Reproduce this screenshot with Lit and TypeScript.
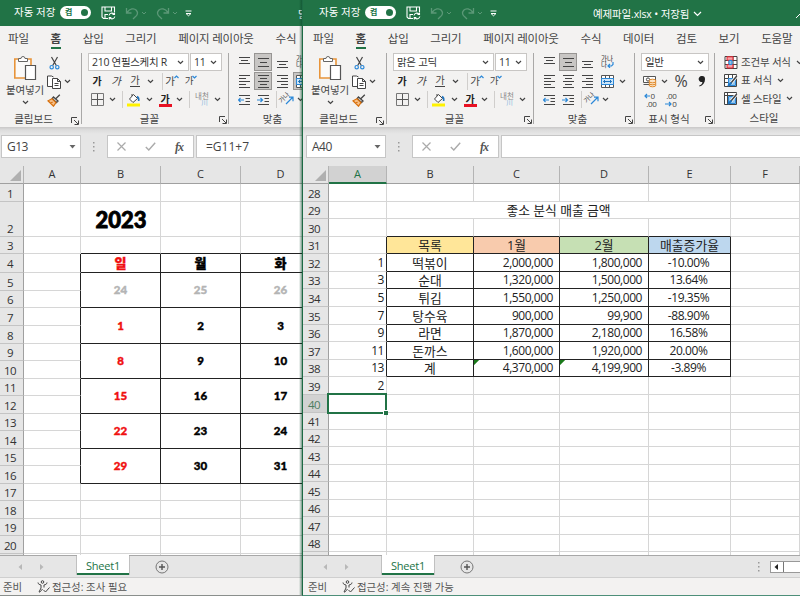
import { LitElement, html, svg, css, nothing } from "lit";
import { customElement, property } from "lit/decorators.js";
import { classMap } from "lit/directives/class-map.js";
import { styleMap } from "lit/directives/style-map.js";

const icon = (w: number, h: number, body: unknown) =>
  html`<svg width=${w} height=${h} viewBox="0 0 ${w} ${h}" fill="none" stroke="#444" stroke-width="1">${body}</svg>`;

const chev = () => icon(7, 5, svg`<path d="M1 1l2.500 2.500L6 1" stroke-width="1.2"/>`);
const launcher = () =>
  icon(8, 8, svg`<path d="M.5 6V.5H6M3 3l4 4M7.500 3.500v4h-4" />`);

const save = () =>
  icon(15, 14, svg`<g stroke="#fff" stroke-width="1.1"><path d="M7 12.500H2.500L1 11V1h12.500v5"/><path d="M4 1v4h6.500V1M4 12V8.500h3"/><path d="M8 9.500a2.800 2.800 0 0 1 5-1.200M13.500 6.500v2h-2M13.800 10.500a2.800 2.800 0 0 1-5 1.200M8.300 13.500v-2h2"/></g>`);
const undo = () =>
  icon(14, 13, svg`<path stroke="#5b9877" stroke-width="1.300" d="M1.500 1v5h5M2 5.500C5 1.500 9 .8 11.300 3.200c2.200 2.400 1 5-1 6.600L8 12"/>`);
const redo = () =>
  icon(14, 13, svg`<path stroke="#5b9877" stroke-width="1.300" d="M12.500 1v5h-5M12 5.500C9 1.500 5 .8 2.700 3.200c-2.200 2.400-1 5 1 6.600L6 12"/>`);
const dimChev = () => icon(6, 5, svg`<path stroke="#5b9877" d="M1 1l2 2 2-2"/>`);
const customize = () => icon(7, 7, svg`<path stroke="#fff" d="M.5 1h6M1 3.500l2.500 2.300L6 3.500z"/>`);

const paste = () =>
  icon(24, 27, svg`<path stroke="#e8943a" stroke-width="1.600" fill="#fbfaf9" d="M12 23H1.800V4H18v6"/><path fill="#fff" stroke="#666" d="M5.500 6.500v-3H8a2 2 0 0 1 4 0h2.500v3z"/><path fill="#fff" stroke="#555" stroke-width="1.200" d="M12.500 10.500h10v14h-10z"/>`);
const cut = () =>
  icon(11, 14, svg`<path stroke-width="1.200" d="M2.500 1l4.800 8.500M8.500 1L3.700 9.500"/><circle cx="2.700" cy="11.200" r="1.700" stroke="#2b88d8" stroke-width="1.200"/><circle cx="8.300" cy="11.200" r="1.700" stroke="#2b88d8" stroke-width="1.200"/>`);
const copy = () =>
  icon(14, 14, svg`<path fill="#fff" d="M5 11.500H.5V1h4l2 1"/><path fill="#fff" d="M5.500 3.500h5l3 3v7h-8zM10.500 3.500v3h3M7.500 8.500h4M7.500 10.500h4"/>`);
const brush = () =>
  icon(14, 13, svg`<path stroke-width="1.300" d="M12.800.8L9 4.500M6.500 3l4.500 4-1.500 1.500-4.300-4z"/><path fill="#f6c08a" stroke="#d8700c" stroke-width="1.200" d="M5 4.800L1 6.800l5.500 5.400L9 8.500zM3.500 9.500l2-1.500"/>`);

const borders = () =>
  icon(13, 13, svg`<path stroke="#777" d="M.5.500h12v12H.5z"/><path stroke="#555" d="M6.500 1v11M1 6.500h11"/>`);
const bucket = () =>
  icon(14, 14, svg`<path fill="#fff" d="M6.500 1.500l4 4-4.500 4L2.500 6z"/><path d="M5 3V1"/><path stroke="#1e73be" stroke-width="1.600" d="M10 3.500c1.500.5 2 2 1.700 4.500"/><path stroke="none" fill="#fff200" d="M0 10.500h13v3H0z"/>`);
const lines = (rows: number[][]) =>
  icon(13, 14, svg`<path stroke="#444" stroke-width="1.100" d=${rows.map(([a, b, y]) => `M${a} ${y}H${b}`).join("")}/>`);
const vTop = () => lines([[1, 12, 2.5], [3, 10, 5.5], [1, 12, 8.5]]);
const vMid = () => lines([[1, 12, 3.5], [3, 10, 7.5], [1, 12, 11.5]]);
const vBot = () => lines([[1, 12, 6.5], [3, 10, 9.5], [1, 12, 12.5]]);
const hLeft = () => lines([[1, 12, 1.5], [1, 8, 4.5], [1, 12, 7.5], [1, 8, 10.5], [1, 12, 13.5]]);
const hMid = () => lines([[1, 12, 1.5], [3, 10, 4.5], [1, 12, 7.5], [3, 10, 10.5], [1, 12, 13.5]]);
const hRight = () => lines([[1, 12, 1.5], [5, 12, 4.5], [1, 12, 7.5], [5, 12, 10.5], [1, 12, 13.5]]);
const indent = (right: boolean) =>
  icon(13, 12, svg`<path d="M1 1.500h11M7.500 4.500H12M7.500 7.500H12M1 10.500h11"/><path stroke="#2b88d8" stroke-width="1.200" d=${right ? "M0 6h5.500M3.500 4l2 2-2 2" : "M6 6H.5M2.500 4l-2 2 2 2"}/>`);
const wrap = () =>
  html`<span class="wrap"><span>가나</span><span>다${icon(7, 6, svg`<path stroke="#2b88d8" stroke-width="1.200" d="M6 0v2.500L4.500 4H1M3 2L1 4l2 1.800"/>`)}</span></span>`;
const merge = () =>
  icon(13, 13, svg`<path fill="#fff" stroke="#555" d="M.5.500h12v12H.5zM4.500.500v3M8.500.500v3M4.500 9.500v3M8.500 9.500v3"/><path fill="#cfe6f8" stroke="#2b88d8" d="M.5 3.500h12v6H.5z"/><path stroke="#1e73be" d="M2.500 6.500h8M4 5L2.500 6.500 4 8M9 5l1.500 1.500L9 8"/>`);
const orient = () =>
  html`<span class="orient"><i>가나</i>${icon(9, 9, svg`<path stroke="#2b88d8" stroke-width="1.200" d="M1 8l6.500-6.500M4 1.200h4v4"/>`)}</span>`;
const money = () =>
  icon(14, 13, svg`<path fill="#fff" stroke="#555" d="M.5 1.500h12v6H.5z"/><circle cx="5" cy="4.500" r="1.600"/><path stroke="#555" d="M.5 9.500h6"/><g fill="#fbe3c6" stroke="#e08a2c"><ellipse cx="9.500" cy="10" rx="3.500" ry="1.800"/><ellipse cx="9.500" cy="8" rx="3.500" ry="1.800"/><ellipse cx="9.500" cy="6" rx="3.500" ry="1.800"/></g>`);
const comma = () =>
  icon(8, 11, svg`<path stroke="none" fill="#222" d="M3.800 0A3.100 3.100 0 0 1 7 3.300C7 6.800 5 9.500 1.500 10.500L1.200 9.600C3.200 8.800 4.300 7.500 4.400 5.900A3 3 0 1 1 3.800 0z"/>`);
const decimals = (more: boolean) =>
  html`<span class="dec"><span class=${more ? "" : "end"}>${more ? arrow("M6 3H1M3 1L1 3l2 2") : nothing}${more ? "0" : ".00"}</span><span class="end">${more ? nothing : arrow("M0 3h6M4 1l2 2-2 2")}${more ? ".00" : "0"}</span></span>`;
const arrow = (d: string) => icon(7, 6, svg`<path stroke="#2b88d8" stroke-width="1.200" d=${d}/>`);
const cond = () =>
  icon(13, 13, svg`<path fill="#fff" stroke="#444" d="M.5.500h12v12H.5zM4.500.500v12M8.500.500v12M.5 4.500h12M.5 8.500h12"/><path fill="#f4a3a8" stroke="#e0202c" d="M2.500.800h6v3.500h-6zM2.500 8.500h6V12h-6z"/><path fill="#8fc4ee" stroke="#2b88d8" d="M4.500 4.500h3v4h-3z"/>`);
const tableStyle = (cell: boolean) =>
  icon(14, 13, svg`<path fill="#fff" stroke="#444" d=${cell ? "M.5.500h12v12H.5zM.5 3.500h12M3.500.500v12" : "M.5.500h12v12H.5zM.5 4.500h12M.5 8.500h12M4.500.500v12M8.500.500v12"}/><path fill="#8fc4ee" stroke="#2b88d8" d="M4.500 4.500h7v7h-7z"/><path stroke="#fff" stroke-width="3" d="M12.800 2L7 9"/><path stroke="#444" stroke-width="1.500" d="M12.800 2L7 9"/><path stroke="#1e73be" stroke-width="2" d="M7.500 8.500L4 12"/>`);
const access = () =>
  icon(13, 13, svg`<circle cx="5.500" cy="2" r="1.300"/><path d="M1 2.500c0 2 2 2 3 2.500v3l-2 4M10 2.500c0 2-2 2-3 2.500v2.500M2 12c1 .5 2-1 3.500-3M6.500 10l2 2L12.500 7.500"/>`);

interface Cell {
  r: number;
  c: number;
  rs?: number;
  cs?: number;
  text?: string;
  cls?: string;
}
interface Sheet {
  first: number;
  rowHeights: number[];
  columns: [string, number][];
  headWidth: number;
  cells: Cell[];
  selRow?: number;
  selCol?: number;
}

const days: [string, string, string][] = [
  ["24", "25", "26"], ["1", "2", "3"], ["8", "9", "10"],
  ["15", "16", "17"], ["22", "23", "24"], ["29", "30", "31"],
];
const calendar: Sheet = {
  first: 1,
  rowHeights: [18, 35, 17, 19, 18, 17, 18, 18, 17, 18, 17, 18, 17, 18, 17, 18, 17, 18, 17, 18, 18],
  columns: [["A", 57], ["B", 80], ["C", 80], ["D", 80]],
  headWidth: 24,
  cells: [
    { r: 2, c: 2, text: "2023", cls: "cal year" },
    ...[2, 3, 4].map((c) => ({ r: 3, c, cls: "kb" })),
    ...["일", "월", "화"].map((text, i) => ({ r: 4, c: i + 2, text, cls: `cal week kr kb ${i ? "" : "red"}` })),
    ...days.flatMap((d, k) =>
      d.map((text, i) => ({
        r: 5 + k * 2, c: i + 2, rs: 2, text,
        cls: `cal kr kb ${k === 0 ? "dim" : i === 0 ? "red" : ""}`,
      }))),
    ...Array.from({ length: 13 }, (_, k) => ({ r: 4 + k, c: 1, cls: "kr" })),
  ],
};

const sales = [
  ["1", "떡볶이", "2,000,000", "1,800,000", "-10.00%"],
  ["3", "순대", "1,320,000", "1,500,000", "13.64%"],
  ["5", "튀김", "1,550,000", "1,250,000", "-19.35%"],
  ["7", "탕수육", "900,000", "99,900", "-88.90%"],
  ["9", "라면", "1,870,000", "2,180,000", "16.58%"],
  ["11", "돈까스", "1,600,000", "1,920,000", "20.00%"],
  ["13", "계", "4,370,000", "4,199,900", "-3.89%"],
];
const report: Sheet = {
  first: 28,
  rowHeights: [18, 17, 18, 17, 18, 17, 18, 18, 17, 18, 17, 18, 18, 17, 17, 18, 17, 18, 17, 18, 17, 18],
  columns: [["A", 58], ["B", 87], ["C", 86], ["D", 89], ["E", 82], ["F", 69]],
  headWidth: 26,
  selRow: 40,
  selCol: 1,
  cells: [
    { r: 2, c: 2, cs: 4, text: "좋소 분식 매출 금액", cls: "ko" },
    ...[2, 3, 4, 5].map((c) => ({ r: 3, c, cls: "kb" })),
    { r: 4, c: 1, cls: "kr" },
    ...["목록", "1월", "2월", "매출증가율"].map((text, i) => ({
      r: 4, c: i + 2, text, cls: `ko kr kb ${["yellow", "orange", "green", "blue"][i]}`,
    })),
    ...sales.flatMap((row, k) =>
      row.map((text, i) => ({
        r: 5 + k, c: i + 1, text,
        cls: ["num tight kr", "ko kr kb", "num kr kb", "num kr kb", "pct kr kb"][i] +
          (k === 6 && (i === 2 || i === 3) ? " flag" : ""),
      }))),
    { r: 12, c: 1, text: "2", cls: "num tight" },
    { r: 13, c: 1, cls: "active" },
  ],
};

@customElement("sheet-grid")
class SheetGrid extends LitElement {
  @property({ attribute: false }) sheet!: Sheet;

  static styles = css`
    :host { display: block; overflow: hidden; background: #fff; }
    .grid { display: grid; width: max-content; }
    .cell, .row, .col, .corner { box-sizing: border-box; display: flex; align-items: center; justify-content: center; white-space: nowrap; min-width: 0; min-height: 0; line-height: 12px; }
    .cell { border-right: 1px solid #d6d6d6; border-bottom: 1px solid #d6d6d6; color: #222; font-size: 12px; }
    .col { border-right: 1px solid #b4b4b4; border-bottom: 1px solid #a0a0a0; background: #e6e6e6; color: #333; font-size: 11px; padding-bottom: 2px; }
    .row { border-right: 1px solid #a0a0a0; border-bottom: 1px solid #c4c4c4; background: #e6e6e6; color: #333; font-size: 11.500px; letter-spacing: -.6px; padding-right: 3px; padding-top: 2px; }
    .row.tall { align-items: flex-end; padding-bottom: 1px; }
    .col.sel { background: #d2d2d2; color: #217346; border-bottom: 2px solid #217346; padding-bottom: 1px; }
    .row.sel { background: #d2d2d2; color: #4d7d62; }
    .corner { border-right: 1px solid #b4b4b4; border-bottom: 1px solid #a0a0a0; background: #e6e6e6; justify-content: flex-end; align-items: flex-end; padding: 0 2px 2px 0; }
    .kr { border-right-color: #222; }
    .kb { border-bottom-color: #222; }
    .ko { font-size: 12.8px; }
    .num { justify-content: flex-end; padding-right: 6px; letter-spacing: -.45px; }
    .tight { padding-right: 2px; }
    .pct { letter-spacing: -.4px; padding-right: 2px; }
    .yellow { background: #ffe699; }
    .orange { background: #f8cbad; }
    .green { background: #c6e0b4; }
    .blue { background: #bdd7ee; }
    .cal { font-family: Lato, "Noto Sans CJK KR", sans-serif; font-weight: 900; font-size: 11.5px; color: #000; -webkit-text-stroke: .4px currentColor; }
    .year { font-size: 22px; line-height: 24px; -webkit-text-stroke-width: .8px; padding: 2px 0 0 1px; }
    .week { font-size: 13px; }
    .red { color: #f01010; }
    .dim { color: #b4b4b4; }
    .flag { background: linear-gradient(135deg, #1b7a1b 3.500px, transparent 3.600px); }
    .active { position: relative; }
    .active::before { content: ""; position: absolute; inset: -2px -1px -2px -2px; border: 2px solid #217346; }
    .active::after { content: ""; position: absolute; right: -2px; bottom: -3px; width: 4px; height: 4px; background: #217346; border: solid #fff; border-width: 1px 0 0 1px; }
  `;

  render() {
    const s = this.sheet;
    const used = new Set<string>();
    for (const k of s.cells)
      for (let i = 0; i < (k.rs ?? 1); i++)
        for (let j = 0; j < (k.cs ?? 1); j++) used.add(`${k.r + i},${k.c + j}`);
    const all: Cell[] = [];
    s.rowHeights.forEach((_, r) => s.columns.forEach((_, c) => {
      if (!used.has(`${r + 1},${c + 1}`)) all.push({ r: r + 1, c: c + 1 });
    }));
    all.push(...s.cells);
    const tracks = {
      gridTemplateColumns: `${s.headWidth}px ${s.columns.map((c) => c[1] + "px").join(" ")}`,
      gridTemplateRows: `18px ${s.rowHeights.map((h) => h + "px").join(" ")}`,
    };
    return html`<div class="grid" style=${styleMap(tracks)}>
      <div class="corner">${icon(11, 11, svg`<path stroke="none" fill="#b0b0b0" d="M11 0v11H0z"/>`)}</div>
      ${s.columns.map(([n], i) => html`<div class=${classMap({ col: true, sel: s.selCol === i + 1 })}>${n}</div>`)}
      ${s.rowHeights.map((h, i) => html`<div class=${classMap({ row: true, tall: h > 30, sel: s.selRow === s.first + i })}
        style=${styleMap({ gridArea: `${i + 2} / 1` })}>${s.first + i}</div>`)}
      ${all.map((k) => html`<div class="cell ${k.cls ?? ""}"
        style=${styleMap({ gridArea: `${k.r + 1} / ${k.c + 1} / span ${k.rs ?? 1} / span ${k.cs ?? 1}` })}>${k.text ?? nothing}</div>`)}
    </div>`;
  }
}

@customElement("ribbon-bar")
class RibbonBar extends LitElement {
  @property() font = "";
  @property({ type: Boolean }) narrow = false;

  static styles = css`
    :host { display: flex; height: 77px; width: max-content; color: #444; font-size: 10.500px; line-height: 12px; white-space: nowrap; }
    svg { display: block; flex: none; }
    .group { box-sizing: border-box; display: flex; flex-direction: column; padding-top: 3px; height: 77px; position: relative; }
    .group::after { content: ""; position: absolute; right: 0; top: 3px; height: 71px; width: 1px; background: #a9a8a7; }
    .clip { width: 82px; } .font { width: 147px; } .align { width: 101px; } .number { width: 80px; } .style { width: 100px; }
    .r { display: grid; height: 19px; align-items: center; justify-items: center; justify-content: start; }
    .foot { display: grid; grid-template-columns: 1fr 12px; align-items: center; justify-items: center; height: 17px; padding-top: 1px; }
    .foot svg { margin-top: 3px; }
    .clip .foot { padding-right: 1px; } .clip .foot span { margin-left: -2px; } .align .foot span { margin-left: -2px; }
    .top { display: grid; grid-template-columns: 47px 14px 12px; height: 57px; }
    .big { display: flex; flex-direction: column; align-items: center; padding: 2px 0 0 3px; }
    .big span { font-size: 10.500px; padding-top: 2px; letter-spacing: -.1px; }
    .big span + svg { margin-top: 4px; }
    .stack { display: grid; grid-template-rows: repeat(3, 19px); align-items: center; justify-items: center; }
    .box { box-sizing: border-box; display: flex; align-items: center; justify-content: space-between; background: #fff; border: 1px solid #c8c6c4; height: 18px; width: 100%; padding: 0 4px 0 3px; letter-spacing: -.3px; color: #333; }
    .f1 { grid-template-columns: 101px 32px; column-gap: 1px; padding-left: 6px; }
    .f2 { grid-template-columns: 18px 20px 18px 12px 6px 1px 18px 20px; padding-left: 6px; font-size: 10.500px; }
    .f3 { grid-template-columns: 18px 12px 4px 1px 22px 8px 3px 18px 10px 5px 1px 24px 7px; padding-left: 6px; }
    .a1 { grid-template-columns: 20px 18px 20px 21px; padding-left: 5px; }
    .a2 { grid-template-columns: 20px 18px 20px 20px 10px; padding-left: 5px; }
    .a3 { grid-template-columns: 20px 18px 4px 1px 18px 10px; padding-left: 5px; }
    .n1 { grid-template-columns: 68px; padding-left: 6px; }
    .n2 { grid-template-columns: 16px 12px 22px 19px; padding-left: 7px; }
    .n3 { grid-template-columns: 20px 20px; padding-left: 5px; }
    .sep { width: 1px; height: 17px; background: #d0cecc; }
    b { font-weight: 700; color: #222; font-size: 10px; } .it { font-style: italic; } .un { border-bottom: 1px solid #444; line-height: 11px; font-size: 10px; }
    .sup { display: flex; align-items: flex-start; } .sup svg { margin: 0 0 0 -1px; }
    .down { font-size: 9.500px; }
    .ink { display: flex; flex-direction: column; align-items: center; line-height: 10px; margin-top: 1px; }
    .ink::after { content: ""; width: 13px; height: 3px; background: #e81123; }
    .ruby { display: flex; flex-direction: column; align-items: center; font-size: 7.500px; line-height: 7px; color: #888; }
    .ruby i { font-style: normal; color: #7db4dd; font-size: 6.500px; line-height: 6px; padding-left: 5px; }
    .on { background: #c8c6c4; box-shadow: inset 0 0 0 1px #979593; width: 18px; height: 18px; display: flex; align-items: center; justify-content: center; }
    .wrap { display: flex; flex-direction: column; font-size: 6.500px; line-height: 6.500px; color: #333; } .wrap span { display: flex; }
    .orient { display: flex; align-items: flex-end; font-size: 6.500px; line-height: 7px; } .orient i { font-style: normal; transform: rotate(-45deg); margin: 0 -5px 4px 0; }
    .pc { font: 16px/17px "Open Sans", sans-serif; }
    .dec { display: flex; flex-direction: column; font: 8px/7.500px "Open Sans", sans-serif; width: 13px; letter-spacing: -.3px; }
    .dec span { display: flex; align-items: center; } .dec .end { justify-content: flex-end; }
    .s { display: flex; align-items: center; height: 18.500px; padding-left: 9px; gap: 3px; font-size: 10.500px; letter-spacing: -.2px; }
    .s svg { width: 14px; } .s svg:last-child { margin-left: 2px; width: 7px; }
    .style .foot { height: 18.500px; padding-top: 1px; } .style .foot span { margin-left: 10px; }
    .style::after { display: none; }
  `;

  render() {
    const sep = html`<span class="sep"></span>`;
    const foot = (t: string, l = true) => html`<div class="foot"><span>${t}</span>${l ? launcher() : nothing}</div>`;
    return html`
      <div class="group clip">
        <div class="top">
          <div class="big">${paste()}<span>붙여넣기</span>${chev()}</div>
          <div class="stack">${cut()}${copy()}${brush()}</div>
          <div class="stack"><span></span>${chev()}</div>
        </div>
        ${foot("클립보드")}
      </div>
      <div class="group font">
        <div class="r f1"><div class="box">${this.font}${chev()}</div><div class="box">11${chev()}</div></div>
        <div class="r f2"><b>가</b><span class="it">가</span><span class="un">가</span>${chev()}<span></span>${sep}
          <span class="sup">가${icon(5, 4, svg`<path stroke="#2b88d8" stroke-width="1.200" d="M.5 3l2-2 2 2"/>`)}</span>
          <span class="sup down">가${icon(5, 4, svg`<path stroke="#2b88d8" stroke-width="1.200" d="M.5 1l2 2 2-2"/>`)}</span></div>
        <div class="r f3">${borders()}${chev()}<span></span>${sep}${bucket()}${chev()}<span></span><b class="ink">가</b>${chev()}<span></span>${sep}
          <span class="ruby">내천<i>川</i></span>${chev()}</div>
        ${foot("글꼴")}
      </div>
      <div class="group align">
        <div class="r a1">${vTop()}<span class="on">${vMid()}</span>${vBot()}${wrap()}</div>
        <div class="r a2">${hLeft()}${this.narrow ? html`<span class="on">${hMid()}</span>` : hMid()}${hRight()}
          ${this.narrow ? html`<span class="on">${merge()}</span>` : merge()}${chev()}</div>
        <div class="r a3">${indent(false)}${indent(true)}<span></span>${sep}${orient()}${chev()}</div>
        ${foot("맞춤")}
      </div>
      ${this.narrow ? nothing : html`
      <div class="group number">
        <div class="r n1"><div class="box">일반${chev()}</div></div>
        <div class="r n2">${money()}${chev()}<span class="pc">%</span>${comma()}</div>
        <div class="r n3">${decimals(true)}${decimals(false)}</div>
        ${foot("표시 형식")}
      </div>
      <div class="group style">
        <div class="s">${cond()}<span>조건부 서식</span>${chev()}</div>
        <div class="s">${tableStyle(false)}<span>표 서식</span>${chev()}</div>
        <div class="s">${tableStyle(true)}<span>셀 스타일</span>${chev()}</div>
        ${foot("스타일", false)}
      </div>`}`;
  }
}

const tabNames = ["파일", "홈", "삽입", "그리기", "페이지 레이아웃", "수식", "데이터", "검토", "보기", "도움말"];

@customElement("sheet-window")
class SheetWindow extends LitElement {
  @property() doc = "";
  @property() font = "";
  @property() ref = "";
  @property() formula = "";
  @property() status = "";
  @property({ type: Boolean }) front = false;
  @property({ attribute: false }) sheet!: Sheet;

  static styles = css`
    :host { display: flex; flex-direction: column; height: 596px; min-width: 0; overflow: hidden; box-sizing: border-box; background: #e6e6e6; border-bottom: 1px solid #8a8f8c; font-family: "Open Sans", "Noto Sans CJK KR", sans-serif; color: #444; white-space: nowrap; }
    :host([front]) { border-left: 1px solid #1d6b45; border-bottom-color: #4d8f79; }
    svg { display: block; flex: none; }
    .title { display: flex; align-items: center; height: 26px; background: #217346; color: #fff; font-size: 10.500px; line-height: 14px; padding-left: 14px; flex: none; }
    .auto { width: 46px; padding-bottom: 2px; flex: none; }
    .toggle { box-sizing: border-box; width: 31px; height: 13px; border-radius: 7px; background: #fff; color: #217346; display: flex; align-items: center; justify-content: space-between; padding: 0 3px 0 5px; font-size: 8px; line-height: 10px; font-weight: 700; margin: 0 10px 2px 0; flex: none; }
    .knob { width: 7px; height: 7px; border-radius: 50%; background: #217346; }
    .quick { display: grid; grid-template-columns: 24px 16px 15px 16px 13px 12px; align-items: center; width: 96px; flex: none; }
    .doc { display: flex; align-items: center; gap: 4px; margin-left: 101px; padding-top: 1px; letter-spacing: -.15px; flex: none; }
    :host([front]) .doc { margin-left: 91px; }
    .pen { margin-left: auto; padding-top: 4px; }
    .tabs { display: flex; gap: 21.800px; height: 24px; align-items: center; background: #f3f2f1; padding-left: 8px; font-size: 11.500px; letter-spacing: -.2px; flex: none; }
    .tab { height: 22px; line-height: 24px; box-sizing: border-box; }
    .home { border-bottom: 2px solid #217346; font-weight: 700; line-height: 24px; }
    .ribbon { background: #f3f2f1; flex: none; height: 77px; overflow: hidden; }
    .bar { display: grid; grid-template-columns: 80px 24px 87px 1fr; column-gap: 1px; align-items: stretch; height: 23px; padding: 8px 0 8px 1px; background: linear-gradient(#c9c8c8, #dcdcdc 3px, #e6e6e6 7px); flex: none; font-size: 12px; }
    .field { box-sizing: border-box; background: #fff; border: 1px solid #c6c6c6; display: flex; align-items: center; }
    .name { justify-content: space-between; padding: 0 4px 0 5px; letter-spacing: -.5px; }
    .dots { display: flex; align-items: center; justify-content: center; }
    .tools { display: grid; grid-template-columns: 27px 31px 26px; justify-items: center; }
    .fx { font: italic 700 12px/14px "Liberation Serif", serif; letter-spacing: -1px; color: #555; }
    .input { border-right: 0; padding-left: 9px; letter-spacing: 0; margin-left: 1px; }
    sheet-grid { height: 389px; flex: none; }
    :host([front]) .title { padding-left: 16px; }
    :host([front]) .tabs { padding-left: 10px; }
    :host([front]) .ribbon, :host([front]) .bottom, :host([front]) .state { padding-left: 2px; }
    :host([front]) .bar { padding-left: 3px; }
    .bottom { display: grid; grid-template-columns: 77px 52px 1fr; height: 22px; border-top: 1px solid #a8a8a8; flex: none; box-sizing: border-box; }
    .nav { display: flex; align-items: center; gap: 18px; padding-left: 18px; }
    .sheet { background: #fff; color: #217346; font-size: 11px; letter-spacing: -.25px; border-bottom: 2px solid #217346; height: 17px; line-height: 20px; text-align: center; box-shadow: 0 -1px #fff, 1px 0 #c0c0c0, -1px 0 #c0c0c0; }
    .rest { display: flex; align-items: center; padding-left: 26px; }
    .scroll { display: flex; margin-left: auto; width: 42px; gap: 10px; align-items: center; }
    .thumb { display: flex; border: 1px solid #999; border-right: 0; background: #fff; flex: 1; height: 10px; align-items: center; padding-left: 3px; gap: 4px; }
    .thumb i { width: 1px; height: 10px; background: #777; }
    .state { display: flex; align-items: center; height: 18px; background: #f3f2f1; border-top: 1px solid #cfcfcf; box-sizing: border-box; font-size: 10.400px; line-height: 12px; color: #555; flex: none; }
    .ready { width: 34px; padding-left: 3px; }
    .state svg { margin-right: 2px; }
  `;

  render() {
    const dots = icon(2, 11, svg`<path stroke="none" fill="#999" d="M0 1h1.500v1.500H0zM0 5h1.500v1.500H0zM0 9h1.500v1.500H0z"/>`);
    return html`
      <div class="title">
        <span class="auto">자동 저장</span>
        <span class="toggle">켬<span class="knob"></span></span>
        <span class="quick">${save()}${undo()}${dimChev()}${redo()}${dimChev()}${customize()}</span>
        <span class="doc">${this.doc}${icon(9, 6, svg`<path stroke="#fff" stroke-width="1.200" d="M1 1l3.500 3.500L8 1"/>`)}</span>
        ${this.front ? html`<span class="pen">${icon(4, 5, svg`<path stroke="#fff" d="M0 5l4-4"/>`)}</span>` : nothing}
      </div>
      <div class="tabs">
        ${tabNames.slice(0, this.front ? undefined : 6).map(
          (t) => html`<span class=${classMap({ tab: true, home: t === "홈" })}>${t}</span>`)}
      </div>
      <div class="ribbon"><ribbon-bar .font=${this.font} .narrow=${!this.front}></ribbon-bar></div>
      <div class="bar">
        <div class="field name">${this.ref}${icon(7, 4, svg`<path stroke="none" fill="#666" d="M.5 0h6l-3 3.500z"/>`)}</div>
        <div class="dots">${dots}</div>
        <div class="field tools">
          ${icon(9, 9, svg`<path stroke="#aaa" stroke-width="1.200" d="M.5.500l8 8M8.500.500l-8 8"/>`)}
          ${icon(11, 9, svg`<path stroke="#aaa" stroke-width="1.400" d="M.8 5l3 3L10.200.800"/>`)}
          <span class="fx">fx</span>
        </div>
        <div class="field input">${this.formula}</div>
      </div>
      <sheet-grid .sheet=${this.sheet}></sheet-grid>
      <div class="bottom">
        <div class="nav">${icon(4, 6, svg`<path stroke="none" fill="#b8b8b8" d="M4 0v6L.5 3z"/>`)}${icon(4, 6, svg`<path stroke="none" fill="#b8b8b8" d="M0 0v6l3.500-3z"/>`)}</div>
        <div class="sheet">Sheet1</div>
        <div class="rest">${icon(14, 14, svg`<circle cx="7" cy="7" r="6" stroke="#777"/><path stroke="#555" stroke-width="1.400" d="M7 4v6M4 7h6"/>`)}
          ${this.front ? html`<span class="scroll">${dots}<span class="thumb">${icon(5, 6, svg`<path stroke="none" fill="#222" d="M4 0v6L.5 3z"/>`)}<i></i></span></span>` : nothing}
        </div>
      </div>
      <div class="state"><span class="ready">준비</span>${access()}<span>${this.status}</span></div>`;
  }
}

@customElement("app-root")
class AppRoot extends LitElement {
  static styles = css`
    :host { display: grid; grid-template-columns: 302px 498px; width: 800px; height: 596px; overflow: hidden; }
    .back { position: relative; }
    .back::after { content: ""; position: absolute; inset: 0 0 0 auto; width: 3px; background: linear-gradient(90deg, transparent, rgba(10, 70, 40, .55)); }
  `;

  render() {
    return html`
      <sheet-window class="back" doc="달력" font="210 연필스케치 R" ref="G13" formula="=G11+7" status="접근성: 조사 필요" .sheet=${calendar}></sheet-window>
      <sheet-window front doc="예제파일.xlsx • 저장됨" font="맑은 고딕" ref="A40" status="접근성: 계속 진행 가능" .sheet=${report}></sheet-window>`;
  }
}
